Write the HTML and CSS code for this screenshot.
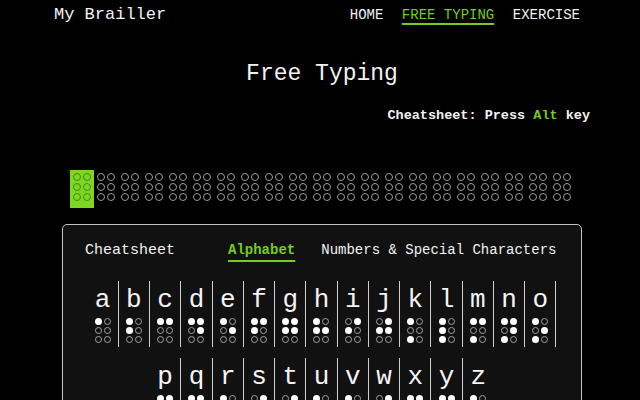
FILE: index.html
```html
<!DOCTYPE html>
<html lang="en">
<head>
<meta charset="utf-8">
<title>My Brailler</title>
<link rel="stylesheet" href="styles.css">
</head>
<body>
<header class="top">
  <div class="brand">My Brailler</div>
  <nav class="nav">
    <a class="nav-link">HOME</a>
    <a class="nav-link active">FREE TYPING</a>
    <a class="nav-link">EXERCISE</a>
  </nav>
</header>
<main class="main">
  <h1 class="title">Free Typing</h1>
  <p class="hint">Cheatsheet: Press <span class="hl">Alt</span> key</p>
  <div class="cells">
    <div class="cell current"><i></i><i></i><i></i><i></i><i></i><i></i></div>
    <div class="cell"><i></i><i></i><i></i><i></i><i></i><i></i></div>
    <div class="cell"><i></i><i></i><i></i><i></i><i></i><i></i></div>
    <div class="cell"><i></i><i></i><i></i><i></i><i></i><i></i></div>
    <div class="cell"><i></i><i></i><i></i><i></i><i></i><i></i></div>
    <div class="cell"><i></i><i></i><i></i><i></i><i></i><i></i></div>
    <div class="cell"><i></i><i></i><i></i><i></i><i></i><i></i></div>
    <div class="cell"><i></i><i></i><i></i><i></i><i></i><i></i></div>
    <div class="cell"><i></i><i></i><i></i><i></i><i></i><i></i></div>
    <div class="cell"><i></i><i></i><i></i><i></i><i></i><i></i></div>
    <div class="cell"><i></i><i></i><i></i><i></i><i></i><i></i></div>
    <div class="cell"><i></i><i></i><i></i><i></i><i></i><i></i></div>
    <div class="cell"><i></i><i></i><i></i><i></i><i></i><i></i></div>
    <div class="cell"><i></i><i></i><i></i><i></i><i></i><i></i></div>
    <div class="cell"><i></i><i></i><i></i><i></i><i></i><i></i></div>
    <div class="cell"><i></i><i></i><i></i><i></i><i></i><i></i></div>
    <div class="cell"><i></i><i></i><i></i><i></i><i></i><i></i></div>
    <div class="cell"><i></i><i></i><i></i><i></i><i></i><i></i></div>
    <div class="cell"><i></i><i></i><i></i><i></i><i></i><i></i></div>
    <div class="cell"><i></i><i></i><i></i><i></i><i></i><i></i></div>
    <div class="cell"><i></i><i></i><i></i><i></i><i></i><i></i></div>
  </div>
  <section class="sheet">
    <div class="sheet-head">
      <span class="sheet-title">Cheatsheet</span>
      <span class="tab active">Alphabet</span>
      <span class="tab">Numbers &amp; Special Characters</span>
    </div>
    <div class="letters">
      <div class="ch"><span class="lt">a</span><div class="dots"><b></b><i></i><i></i><i></i><i></i><i></i></div></div>
      <div class="ch"><span class="lt">b</span><div class="dots"><b></b><i></i><b></b><i></i><i></i><i></i></div></div>
      <div class="ch"><span class="lt">c</span><div class="dots"><b></b><b></b><i></i><i></i><i></i><i></i></div></div>
      <div class="ch"><span class="lt">d</span><div class="dots"><b></b><b></b><i></i><b></b><i></i><i></i></div></div>
      <div class="ch"><span class="lt">e</span><div class="dots"><b></b><i></i><i></i><b></b><i></i><i></i></div></div>
      <div class="ch"><span class="lt">f</span><div class="dots"><b></b><b></b><b></b><i></i><i></i><i></i></div></div>
      <div class="ch"><span class="lt">g</span><div class="dots"><b></b><b></b><b></b><b></b><i></i><i></i></div></div>
      <div class="ch"><span class="lt">h</span><div class="dots"><b></b><i></i><b></b><b></b><i></i><i></i></div></div>
      <div class="ch"><span class="lt">i</span><div class="dots"><i></i><b></b><b></b><i></i><i></i><i></i></div></div>
      <div class="ch"><span class="lt">j</span><div class="dots"><i></i><b></b><b></b><b></b><i></i><i></i></div></div>
      <div class="ch"><span class="lt">k</span><div class="dots"><b></b><i></i><i></i><i></i><b></b><i></i></div></div>
      <div class="ch"><span class="lt">l</span><div class="dots"><b></b><i></i><b></b><i></i><b></b><i></i></div></div>
      <div class="ch"><span class="lt">m</span><div class="dots"><b></b><b></b><i></i><i></i><b></b><i></i></div></div>
      <div class="ch"><span class="lt">n</span><div class="dots"><b></b><b></b><i></i><b></b><b></b><i></i></div></div>
      <div class="ch"><span class="lt">o</span><div class="dots"><b></b><i></i><i></i><b></b><b></b><i></i></div></div>
      <div class="ch"><span class="lt">p</span><div class="dots"><b></b><b></b><b></b><i></i><b></b><i></i></div></div>
      <div class="ch"><span class="lt">q</span><div class="dots"><b></b><b></b><b></b><b></b><b></b><i></i></div></div>
      <div class="ch"><span class="lt">r</span><div class="dots"><b></b><i></i><b></b><b></b><b></b><i></i></div></div>
      <div class="ch"><span class="lt">s</span><div class="dots"><i></i><b></b><b></b><i></i><b></b><i></i></div></div>
      <div class="ch"><span class="lt">t</span><div class="dots"><i></i><b></b><b></b><b></b><b></b><i></i></div></div>
      <div class="ch"><span class="lt">u</span><div class="dots"><b></b><i></i><i></i><i></i><b></b><b></b></div></div>
      <div class="ch"><span class="lt">v</span><div class="dots"><b></b><i></i><b></b><i></i><b></b><b></b></div></div>
      <div class="ch"><span class="lt">w</span><div class="dots"><i></i><b></b><b></b><b></b><i></i><b></b></div></div>
      <div class="ch"><span class="lt">x</span><div class="dots"><b></b><b></b><i></i><i></i><b></b><b></b></div></div>
      <div class="ch"><span class="lt">y</span><div class="dots"><b></b><b></b><i></i><b></b><b></b><b></b></div></div>
      <div class="ch"><span class="lt">z</span><div class="dots"><b></b><i></i><i></i><b></b><b></b><b></b></div></div>
    </div>
  </section>
</main>
</body>
</html>
```
FILE: styles.css
```css
* { box-sizing: border-box; }

html, body {
  margin: 0;
  padding: 0;
  background: #000;
}

body {
  color: #f2f2f2;
  font-family: "Liberation Mono", "Courier New", monospace;
  overflow: hidden;
}

.top {
  display: flex;
  justify-content: space-between;
  align-items: baseline;
  padding: 5px 60px 0 54px;
  line-height: 20px;
}

.brand {
  font-size: 17px;
}

.nav {
  display: flex;
  gap: 18.5px;
  font-size: 14px;
}

.nav-link {
  color: #f2f2f2;
}

.nav-link.active {
  color: #74cc1c;
  text-decoration: underline;
  text-decoration-thickness: 2px;
  text-underline-offset: 4px;
}

.main {
  padding-left: 4px;
}

.title {
  margin: 36px 0 0;
  font-size: 23px;
  line-height: 26px;
  font-weight: normal;
  text-align: center;
}

.hint {
  margin: 21px 0 0;
  padding-right: 50px;
  text-align: right;
  font-size: 13.5px;
  line-height: 16px;
  font-weight: bold;
}

.hl {
  color: #74cc1c;
}

.cells {
  display: flex;
  justify-content: center;
  margin-top: 46px;
}

.cell {
  width: 24px;
  padding: 3px 3px 7px;
  display: grid;
  grid-template-columns: 8px 8px;
  gap: 2px;
}

.cell i {
  width: 8px;
  height: 8px;
  border: 1.5px solid #9c9c9c;
  border-radius: 50%;
}

.cell.current {
  background: #7fd622;
}

.cell.current i {
  border-color: #3f8a12;
}

.sheet {
  width: 520px;
  margin: 16px auto 0;
  background: #111;
  border: 1px solid #c4c4c4;
  border-radius: 5px;
  padding: 16px 22px 40px;
}

.sheet-head {
  display: flex;
  align-items: baseline;
  line-height: 18px;
  white-space: nowrap;
}

.sheet-title {
  font-size: 15px;
  margin-right: 53px;
}

.tab {
  font-size: 14px;
}

.tab + .tab {
  margin-left: 26px;
}

.tab.active {
  color: #74cc1c;
  font-weight: bold;
  text-decoration: underline;
  text-decoration-thickness: 2px;
  text-underline-offset: 6px;
}

.letters {
  display: flex;
  flex-wrap: wrap;
  justify-content: center;
  row-gap: 11px;
  margin-top: 21px;
}

.ch {
  width: 31.27px;
  border-right: 1px solid #cfcfcf;
  padding: 4px 0 4px;
  display: flex;
  flex-direction: column;
  align-items: center;
}

.ch:last-child {
  border-right: none;
}

.lt {
  font-size: 26px;
  line-height: 30px;
  color: #f4f4f4;
}

.dots {
  margin-top: 3px;
  display: grid;
  grid-template-columns: 7px 7px;
  gap: 2px;
}

.dots b,
.dots i {
  width: 7px;
  height: 7px;
  border-radius: 50%;
}

.dots b {
  background: #fff;
}

.dots i {
  border: 1px solid #a0a0a0;
}
```
